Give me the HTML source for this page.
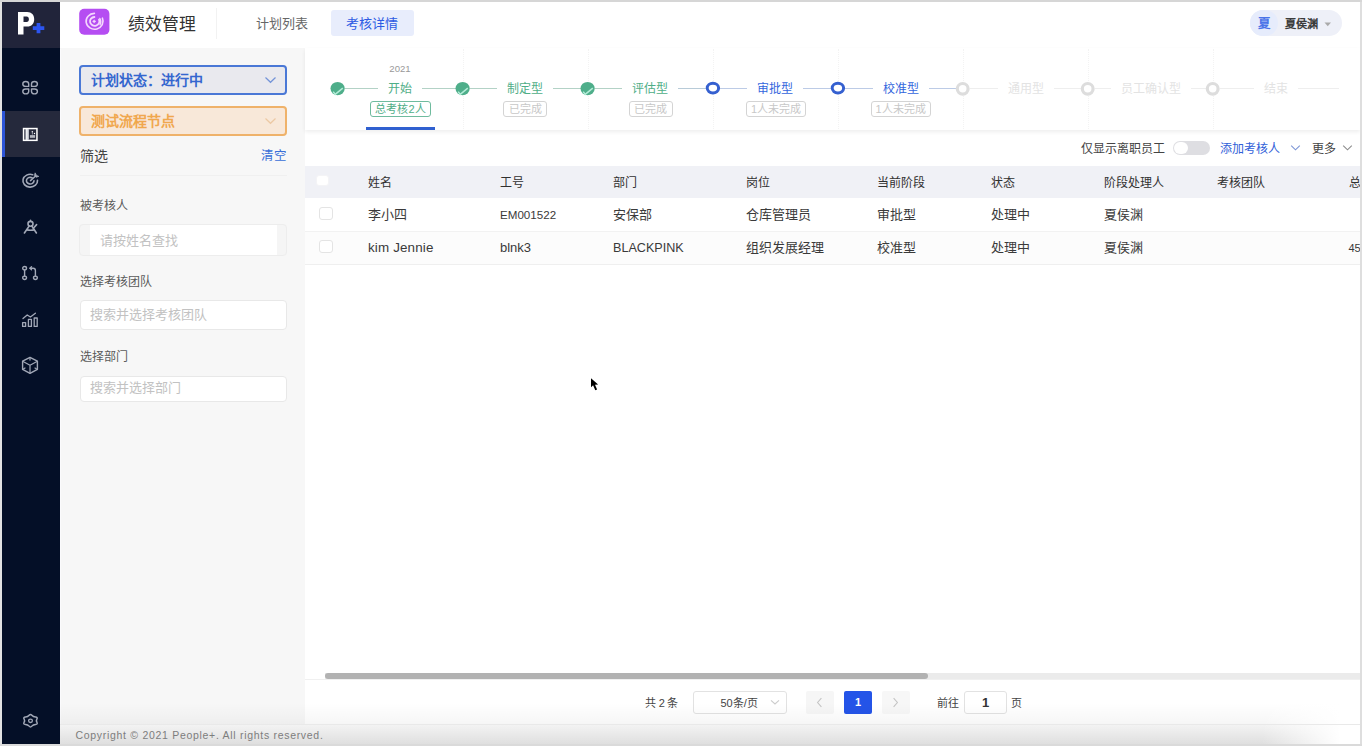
<!DOCTYPE html>
<html lang="zh-CN">
<head>
<meta charset="utf-8">
<title>绩效管理</title>
<style>
*{box-sizing:border-box;margin:0;padding:0}
html,body{width:1362px;height:746px;overflow:hidden}
body{font-family:"Liberation Sans",sans-serif;background:#fff;position:relative;color:#333;font-size:12px}
.a{position:absolute;white-space:nowrap}
/* frame */
#ft{left:0;top:0;width:1362px;height:2px;background:#d6d6d6}
#fl{left:0;top:2px;width:2px;height:744px;background:#e2e2e2}
#fr{left:1360px;top:2px;width:2px;height:744px;background:#dedede}
#fb{left:0;top:744px;width:1362px;height:2px;background:#dadada}
/* sidebar */
#sb{left:2px;top:2px;width:58px;height:742px;background:#040f27}
#logo{left:2px;top:2px;width:58px;height:46px;background:#21243a}
#act{left:2px;top:111px;width:58px;height:46px;background:#25293c}
#actbar{left:2px;top:111px;width:2.5px;height:46px;background:#2d55d8}
/* header */
#hd{left:60px;top:2px;width:1300px;height:47px;background:#fff;border-bottom:1px solid #f0f0f0}
/* left panel */
#lp{left:60px;top:48px;width:245px;height:677px;background:#f7f7f7}
/* main */
#mn{left:305px;top:48px;width:1055px;height:677px;background:#fff}
/* footer */
#ftr{left:60px;top:724px;width:1300px;height:20px;background:linear-gradient(#f4f4f4,#dfdfdf)}
</style>
</head>
<body>
<div class="a" id="sb"></div>
<div class="a" id="logo"></div>
<div class="a" id="act"></div>
<div class="a" id="actbar"></div>
<div class="a" id="hd"></div>
<div class="a" id="lp"></div>
<div class="a" id="mn"></div>
<div class="a" style="left:60px;top:49px;width:1px;height:675px;background:#fbfbfd"></div>
<div class="a" id="ftr"></div>

<!-- icon1: clover -->
<svg class="a" style="left:21px;top:80px" width="18" height="16" viewBox="0 0 18 16" fill="none" stroke="#a2a8b7" stroke-width="1.4" stroke-linejoin="round">
  <path d="M7.7 6.4 H4.65 A2.95 2.45 0 1 1 7.7 3.9 Z"/>
  <path d="M10.5 6.4 H13.55 A2.95 2.45 0 1 0 10.5 3.9 Z"/>
  <path d="M7.7 9 H4.65 A2.95 2.45 0 1 0 7.7 11.5 Z"/>
  <path d="M10.5 9 H13.55 A2.95 2.45 0 1 1 10.5 11.5 Z"/>
</svg>
<!-- icon2: board (active) -->
<svg class="a" style="left:22px;top:127px" width="17" height="15" viewBox="0 0 17 15">
  <rect x="1.55" y="1.55" width="13.4" height="11.8" fill="none" stroke="#fff" stroke-width="1.5"/>
  <rect x="3.5" y="2" width="3.4" height="11" fill="#eceef2"/>
  <rect x="5.7" y="2" width="1.3" height="11" fill="#b9bcc6"/>
  <rect x="7.9" y="8.1" width="5.2" height="2.7" fill="#b3b6c0"/>
  <circle cx="10.3" cy="4.8" r="0.7" fill="#fff"/>
  <circle cx="12.5" cy="6.5" r="0.7" fill="#fff"/>
  <rect x="9.9" y="5" width="0.9" height="2.6" fill="#9fa3b0"/>
</svg>
<!-- icon3: target -->
<svg class="a" style="left:21px;top:172px" width="19" height="17" viewBox="0 0 19 17" fill="none" stroke="#a2a8b7" stroke-linecap="round">
  <path d="M11.7 2.7 A7.3 6.4 0 1 0 16.5 8.2" stroke-width="1.6"/>
  <path d="M11.1 5.8 A3.8 3.3 0 1 0 13 8.9" stroke-width="1.6"/>
  <path d="M9.5 8.6 L14.6 4" stroke-width="1.5"/>
  <path d="M14.3 1.2 L15.5 3.4 L17.8 4.4 L15.2 5.2 L13.6 3.8 Z" stroke-width="0.8" stroke-linejoin="round" fill="#a2a8b7"/>
</svg>
<!-- icon4: compass/person -->
<svg class="a" style="left:22px;top:219px" width="17" height="16" viewBox="0 0 17 16" fill="none" stroke="#a2a8b7" stroke-linecap="round" stroke-width="1.6">
  <ellipse cx="8.5" cy="4.8" rx="2.5" ry="2.4"/>
  <path d="M8.5 1.4 V2.2"/>
  <path d="M7.2 7 L2.4 14"/>
  <path d="M9.8 7 L14.4 14"/>
  <path d="M4.8 10.9 Q8.5 11.6 12.2 10.9"/>
  <path d="M11.4 9.2 L14.6 5.6"/>
</svg>
<!-- icon5: pull request -->
<svg class="a" style="left:21px;top:265px" width="18" height="16" viewBox="0 0 18 16" fill="none" stroke="#a2a8b7" stroke-width="1.4" stroke-linecap="round" stroke-linejoin="round">
  <ellipse cx="3.6" cy="3.2" rx="1.9" ry="1.7"/>
  <ellipse cx="3.6" cy="12.8" rx="1.9" ry="1.7"/>
  <ellipse cx="14.4" cy="12.8" rx="1.9" ry="1.7"/>
  <path d="M3.6 5 V11"/>
  <path d="M14.4 11 V5.4 C14.4 4 13.6 3.2 12.2 3.2 H9"/>
  <path d="M10.5 1.7 L9 3.2 L10.5 4.7"/>
</svg>
<!-- icon6: chart -->
<svg class="a" style="left:21px;top:312px" width="18" height="16" viewBox="0 0 18 16" fill="none" stroke="#a2a8b7" stroke-width="1.3" stroke-linecap="round" stroke-linejoin="round">
  <rect x="1.6" y="10.6" width="3" height="3.8"/>
  <rect x="7.4" y="7.4" width="3" height="7"/>
  <rect x="13.2" y="6" width="3" height="8.4"/>
  <path d="M2 6.6 L6.2 3 L9.4 5 L14.4 1.2"/>
</svg>
<!-- icon7: cube -->
<svg class="a" style="left:21px;top:356px" width="18" height="19" viewBox="0 0 18 19" fill="none" stroke="#a2a8b7" stroke-width="1.4" stroke-linejoin="round">
  <path d="M9 1.4 L16.4 5.2 V13.4 L9 17.4 L1.6 13.4 V5.2 Z"/>
  <path d="M1.6 5.2 L9 9.2 L16.4 5.2 M9 9.2 V17.4" stroke-width="1.2"/>
  <path d="M9 1.4 V4.6 M1.6 13.4 L4.4 11.8 M16.4 13.4 L13.6 11.8" stroke-width="1.2"/>
</svg>
<!-- gear -->
<svg class="a" style="left:22px;top:713px" width="17" height="16" viewBox="0 0 17 16" fill="none" stroke="#a2a8b7" stroke-width="1.5" stroke-linejoin="round">
  <path d="M7.15 2.26 Q8.50 0.65 9.85 2.26 Q11.20 3.87 13.57 4.02 Q15.95 4.17 14.92 5.94 Q13.90 7.70 14.92 9.46 Q15.95 11.23 13.57 11.38 Q11.20 11.53 9.85 13.14 Q8.50 14.75 7.15 13.14 Q5.80 11.53 3.43 11.38 Q1.05 11.23 2.08 9.46 Q3.10 7.70 2.08 5.94 Q1.05 4.17 3.43 4.02 Q5.80 3.87 7.15 2.26 Z"/>
  <ellipse cx="8.5" cy="7.8" rx="1.9" ry="1.7" stroke-width="1.3"/>
</svg>

<!-- logo -->
<svg class="a" style="left:2px;top:2px" width="58" height="46" viewBox="2 2 58 46">
  <path d="M18 12 H27.2 C31.6 12 34.2 14.9 34.2 19.2 C34.2 23.6 31.6 26.5 27.2 26.5 H23.5 V34.5 H18 Z M23.5 16.5 V22 H26.6 C28.2 22 28.9 20.8 28.9 19.2 C28.9 17.7 28.2 16.5 26.6 16.5 Z" fill="#fff" fill-rule="evenodd"/>
  <path d="M36.6 23 h3.8 v3.2 h3.9 v3.8 h-3.9 v3.2 h-3.8 v-3.2 h-3.8 v-3.8 h3.8 z" fill="#2c55f0"/>
</svg>
<!-- app icon -->
<svg class="a" style="left:79px;top:8px" width="31" height="27" viewBox="0 0 31 27">
  <rect x="0.2" y="0.8" width="30.2" height="26" rx="5" fill="#b54df2"/>
  <g fill="none" stroke="#f5d8fd" stroke-linecap="round">
    <path d="M15.4 5.4 A8.5 7.9 0 1 0 23.4 10.2" stroke-width="1.6"/>
    <path d="M15.4 9 A4.7 4.4 0 1 0 20 11.6" stroke-width="1.8"/>
    <path d="M20.8 10.4 A6.6 6.2 0 0 1 21 16.6" stroke-width="1.3"/>
  </g>
  <path d="M13.6 13.4 L15.2 12 L16.8 13.4 L15.2 14.8 Z" fill="#f5d8fd" stroke="#f5d8fd" stroke-width="0.6" stroke-linejoin="round"/>
</svg>
<div class="a" style="left:128px;top:14px;height:22px;line-height:22px;font-size:16.8px;color:#333;letter-spacing:0px">绩效管理</div>
<div class="a" style="left:216px;top:8px;width:1px;height:31px;background:#f2f2f2"></div>
<div class="a" style="left:256px;top:13px;height:22px;line-height:22px;font-size:13px;color:#666">计划列表</div>
<div class="a" style="left:331px;top:10px;width:83px;height:26px;background:#e8edfc;border-radius:3px"></div>
<div class="a" style="left:346px;top:13px;height:22px;line-height:22px;font-size:13px;color:#2d5be3">考核详情</div>
<!-- user chip -->
<div class="a" style="left:1250px;top:10px;width:92px;height:26px;border-radius:13px;background:#eef0f8"></div>
<div class="a" style="left:1250px;top:10px;width:28px;height:26px;border-radius:13px;background:#e6ecfc"></div>
<div class="a" style="left:1258px;top:12px;height:24px;line-height:24px;font-size:12.5px;font-weight:bold;color:#4a74e8">夏</div>
<div class="a" style="left:1284.5px;top:12px;height:24px;line-height:24px;font-size:11.2px;font-weight:bold;color:#3c3c3c">夏侯渊</div>
<svg class="a" style="left:1324px;top:21.5px" width="8" height="5" viewBox="0 0 8 5"><path d="M0.5 0.5 H7 L3.75 4.2 Z" fill="#aaa"/></svg>


<div class="a" style="left:79px;top:65px;width:208px;height:30px;border:2px solid #4a78d6;border-radius:4px;background:#e9e9ee"></div>
<div class="a" style="left:91px;top:69px;height:22px;line-height:22px;font-size:14px;font-weight:bold;color:#3466cf">计划状态：进行中</div>
<svg class="a" style="left:264px;top:76px" width="13" height="8" viewBox="0 0 13 8"><path d="M1.5 1.5 L6.5 6.3 L11.5 1.5" fill="none" stroke="#7494d8" stroke-width="1.2"/></svg>
<div class="a" style="left:79px;top:106px;width:208px;height:30px;border:2px solid #efb26a;border-radius:4px;background:#f8e8d9"></div>
<div class="a" style="left:91px;top:110px;height:22px;line-height:22px;font-size:14px;font-weight:bold;color:#f0a74e">测试流程节点</div>
<svg class="a" style="left:264px;top:117px" width="13" height="8" viewBox="0 0 13 8"><path d="M1.5 1.5 L6.5 6.3 L11.5 1.5" fill="none" stroke="#ecc9a4" stroke-width="1.2"/></svg>
<div class="a" style="left:80px;top:144.5px;height:22px;line-height:22px;font-size:14px;font-weight:500;color:#444">筛选</div>
<div class="a" style="left:261px;top:145px;height:22px;line-height:22px;font-size:12.5px;color:#3a6fd8">清空</div>
<div class="a" style="left:80px;top:175px;width:207px;height:1px;background:#f0f0f0"></div>
<div class="a" style="left:80px;top:195px;height:22px;line-height:22px;font-size:12px;color:#5a5a5a">被考核人</div>
<div class="a" style="left:79px;top:224px;width:208px;height:32px;border:1px solid #ededed;border-radius:4px;background:#f5f5f5"></div>
<div class="a" style="left:90px;top:225px;width:187px;height:30px;background:#fff"></div>
<div class="a" style="left:100px;top:229.5px;height:22px;line-height:22px;font-size:13px;color:#c2c2c2">请按姓名查找</div>
<div class="a" style="left:80px;top:271px;height:22px;line-height:22px;font-size:12px;color:#5a5a5a">选择考核团队</div>
<div class="a" style="left:80px;top:300px;width:207px;height:30px;border:1px solid #e8e8e8;border-radius:4px;background:#fff"></div>
<div class="a" style="left:90px;top:304px;height:22px;line-height:22px;font-size:13px;color:#c2c2c2">搜索并选择考核团队</div>
<div class="a" style="left:80px;top:346px;height:22px;line-height:22px;font-size:12px;color:#5a5a5a">选择部门</div>
<div class="a" style="left:80px;top:376px;width:207px;height:26px;border:1px solid #e8e8e8;border-radius:4px;background:#fff"></div>
<div class="a" style="left:90px;top:377px;height:22px;line-height:22px;font-size:13px;color:#c2c2c2">搜索并选择部门</div>


<div class="a" style="left:305px;top:48px;width:1055px;height:82px;background:#fff;box-shadow:0 2px 4px rgba(0,0,0,0.07)"></div>
<div class="a" style="left:463px;top:49px;width:0;height:80px;border-left:1px dotted #f3f3f3"></div>
<div class="a" style="left:588px;top:49px;width:0;height:80px;border-left:1px dotted #f3f3f3"></div>
<div class="a" style="left:713px;top:49px;width:0;height:80px;border-left:1px dotted #f3f3f3"></div>
<div class="a" style="left:838px;top:49px;width:0;height:80px;border-left:1px dotted #f3f3f3"></div>
<div class="a" style="left:963px;top:49px;width:0;height:80px;border-left:1px dotted #f3f3f3"></div>
<div class="a" style="left:1088px;top:49px;width:0;height:80px;border-left:1px dotted #f3f3f3"></div>
<div class="a" style="left:1213px;top:49px;width:0;height:80px;border-left:1px dotted #f3f3f3"></div>
<div class="a" style="left:345px;top:88px;width:33px;height:1px;background:#b3d2c6"></div>
<div class="a" style="left:422px;top:88px;width:34px;height:1px;background:#b3d2c6"></div>
<div class="a" style="left:378px;top:78px;width:44px;height:22px;line-height:22px;font-size:12px;color:#4fae87;text-align:center">开始</div>
<div class="a" style="left:470px;top:88px;width:27px;height:1px;background:#b3d2c6"></div>
<div class="a" style="left:553px;top:88px;width:28px;height:1px;background:#b3d2c6"></div>
<div class="a" style="left:497px;top:78px;width:56px;height:22px;line-height:22px;font-size:12px;color:#4fae87;text-align:center">制定型</div>
<div class="a" style="left:595px;top:88px;width:27px;height:1px;background:#b3d2c6"></div>
<div class="a" style="left:678px;top:88px;width:28px;height:1px;background:#b8cbd8"></div>
<div class="a" style="left:622px;top:78px;width:56px;height:22px;line-height:22px;font-size:12px;color:#4fae87;text-align:center">评估型</div>
<div class="a" style="left:720px;top:88px;width:27px;height:1px;background:#bccbe6"></div>
<div class="a" style="left:803px;top:88px;width:28px;height:1px;background:#bccbe6"></div>
<div class="a" style="left:747px;top:78px;width:56px;height:22px;line-height:22px;font-size:12px;color:#3366dd;text-align:center">审批型</div>
<div class="a" style="left:845px;top:88px;width:28px;height:1px;background:#bccbe6"></div>
<div class="a" style="left:929px;top:88px;width:27px;height:1px;background:#bccbe6"></div>
<div class="a" style="left:873px;top:78px;width:56px;height:22px;line-height:22px;font-size:12px;color:#3366dd;text-align:center">校准型</div>
<div class="a" style="left:970px;top:88px;width:28px;height:1px;background:#eeeeee"></div>
<div class="a" style="left:1054px;top:88px;width:27px;height:1px;background:#eeeeee"></div>
<div class="a" style="left:998px;top:78px;width:56px;height:22px;line-height:22px;font-size:12px;color:#e3e3e3;text-align:center">通用型</div>
<div class="a" style="left:1095px;top:88px;width:16px;height:1px;background:#eeeeee"></div>
<div class="a" style="left:1191px;top:88px;width:15px;height:1px;background:#eeeeee"></div>
<div class="a" style="left:1111px;top:78px;width:80px;height:22px;line-height:22px;font-size:12px;color:#e3e3e3;text-align:center">员工确认型</div>
<div class="a" style="left:1220px;top:88px;width:34px;height:1px;background:#eeeeee"></div>
<div class="a" style="left:1298px;top:88px;width:41px;height:1px;background:#eeeeee"></div>
<div class="a" style="left:1254px;top:78px;width:44px;height:22px;line-height:22px;font-size:12px;color:#e3e3e3;text-align:center">结束</div>
<svg class="a" style="left:330px;top:81px" width="15" height="15" viewBox="0 0 15 15"><ellipse cx="7.6" cy="7.6" rx="7.1" ry="6.7" fill="#4eae8a"/><path d="M3.2 10.6 L5.2 13.4 L12.8 7.2" fill="none" stroke="#b4ecd8" stroke-width="1.5"/></svg>
<svg class="a" style="left:455px;top:81px" width="15" height="15" viewBox="0 0 15 15"><ellipse cx="7.6" cy="7.6" rx="7.1" ry="6.7" fill="#4eae8a"/><path d="M3.2 10.6 L5.2 13.4 L12.8 7.2" fill="none" stroke="#b4ecd8" stroke-width="1.5"/></svg>
<svg class="a" style="left:580px;top:81px" width="15" height="15" viewBox="0 0 15 15"><ellipse cx="7.6" cy="7.6" rx="7.1" ry="6.7" fill="#4eae8a"/><path d="M3.2 10.6 L5.2 13.4 L12.8 7.2" fill="none" stroke="#b4ecd8" stroke-width="1.5"/></svg>
<svg class="a" style="left:705px;top:81px" width="15" height="15" viewBox="0 0 15 15"><ellipse cx="7.9" cy="7.1" rx="5.7" ry="4.85" fill="#fff" stroke="#3560d0" stroke-width="2.9"/></svg>
<svg class="a" style="left:830px;top:81px" width="15" height="15" viewBox="0 0 15 15"><ellipse cx="7.9" cy="7.1" rx="5.7" ry="4.85" fill="#fff" stroke="#3560d0" stroke-width="2.9"/></svg>
<svg class="a" style="left:955px;top:81px" width="15" height="15" viewBox="0 0 15 15"><ellipse cx="7.7" cy="7.8" rx="5.4" ry="5.3" fill="#fff" stroke="#dddddd" stroke-width="3.2"/></svg>
<svg class="a" style="left:1080px;top:81px" width="15" height="15" viewBox="0 0 15 15"><ellipse cx="7.7" cy="7.8" rx="5.4" ry="5.3" fill="#fff" stroke="#dddddd" stroke-width="3.2"/></svg>
<svg class="a" style="left:1205px;top:81px" width="15" height="15" viewBox="0 0 15 15"><ellipse cx="7.7" cy="7.8" rx="5.4" ry="5.3" fill="#fff" stroke="#dddddd" stroke-width="3.2"/></svg>
<div class="a" style="left:388px;top:62px;width:24px;height:14px;line-height:14px;font-size:9.6px;color:#999;text-align:center">2021</div>
<div class="a" style="left:370px;top:101px;width:61px;height:16px;line-height:15px;border:1px solid #6fbb9e;border-radius:3px;font-size:11px;color:#4fae87;text-align:center;background:#fff">总考核2人</div>
<div class="a" style="left:503px;top:101px;width:44px;height:16px;line-height:15px;border:1px solid #d4d4d4;border-radius:3px;font-size:11px;color:#c8c8c8;text-align:center;background:#fff">已完成</div>
<div class="a" style="left:628.5px;top:101px;width:44px;height:16px;line-height:15px;border:1px solid #d4d4d4;border-radius:3px;font-size:11px;color:#c8c8c8;text-align:center;background:#fff">已完成</div>
<div class="a" style="left:746px;top:101px;width:60px;height:16px;line-height:15px;border:1px solid #d4d4d4;border-radius:3px;font-size:11px;color:#c8c8c8;text-align:center;background:#fff">1人未完成</div>
<div class="a" style="left:870.5px;top:101px;width:60px;height:16px;line-height:15px;border:1px solid #d4d4d4;border-radius:3px;font-size:11px;color:#c8c8c8;text-align:center;background:#fff">1人未完成</div>
<div class="a" style="left:366px;top:127px;width:69px;height:3px;background:#3060d0"></div>


<div class="a" style="left:1081px;top:138px;height:22px;line-height:22px;font-size:12px;color:#444">仅显示离职员工</div>
<div class="a" style="left:1173px;top:141px;width:37px;height:14px;border-radius:7px;background:#dedee2"></div>
<div class="a" style="left:1174px;top:142px;width:14px;height:12px;border-radius:6px;background:#fff"></div>
<div class="a" style="left:1220px;top:138px;height:22px;line-height:22px;font-size:12px;color:#3060d8">添加考核人</div>
<svg class="a" style="left:1290px;top:144px" width="11" height="8" viewBox="0 0 11 8"><path d="M1.2 1.6 L5.5 5.8 L9.8 1.6" fill="none" stroke="#7d96d6" stroke-width="1.1"/></svg>
<div class="a" style="left:1312px;top:138px;height:22px;line-height:22px;font-size:12px;color:#444">更多</div>
<svg class="a" style="left:1342px;top:144px" width="11" height="8" viewBox="0 0 11 8"><path d="M1.2 1.6 L5.5 5.8 L9.8 1.6" fill="none" stroke="#8c8c8c" stroke-width="1.1"/></svg>


<div class="a" style="left:305px;top:166px;width:1055px;height:32px;background:#f0f1f6"></div>
<div class="a" style="left:305px;top:231px;width:1055px;height:1px;background:#f2f2f2"></div>
<div class="a" style="left:305px;top:232px;width:1055px;height:32px;background:#fcfcfc"></div>
<div class="a" style="left:305px;top:264px;width:1055px;height:1px;background:#efefef"></div>
<div class="a" style="left:316px;top:175px;width:13px;height:11px;border-radius:3px;background:#fff;border:1px solid #f4f4f6"></div>
<div class="a" style="left:319px;top:207px;width:14px;height:13px;border-radius:3px;background:#fff;border:1px solid #e4e4e4"></div>
<div class="a" style="left:319px;top:240px;width:14px;height:13px;border-radius:3px;background:#fff;border:1px solid #e4e4e4"></div>
<div class="a" style="left:368px;top:171.5px;height:22px;line-height:22px;font-size:12px;font-weight:500;color:#303030">姓名</div>
<div class="a" style="left:500px;top:171.5px;height:22px;line-height:22px;font-size:12px;font-weight:500;color:#303030">工号</div>
<div class="a" style="left:613px;top:171.5px;height:22px;line-height:22px;font-size:12px;font-weight:500;color:#303030">部门</div>
<div class="a" style="left:746px;top:171.5px;height:22px;line-height:22px;font-size:12px;font-weight:500;color:#303030">岗位</div>
<div class="a" style="left:877px;top:171.5px;height:22px;line-height:22px;font-size:12px;font-weight:500;color:#303030">当前阶段</div>
<div class="a" style="left:990.5px;top:171.5px;height:22px;line-height:22px;font-size:12px;font-weight:500;color:#303030">状态</div>
<div class="a" style="left:1103.5px;top:171.5px;height:22px;line-height:22px;font-size:12px;font-weight:500;color:#303030">阶段处理人</div>
<div class="a" style="left:1217px;top:171.5px;height:22px;line-height:22px;font-size:12px;font-weight:500;color:#303030">考核团队</div>
<div class="a" style="left:1348.5px;top:171.5px;height:22px;line-height:22px;font-size:12px;font-weight:500;color:#303030">总分</div>
<div class="a" style="left:368px;top:204px;height:22px;line-height:22px;font-size:13px;color:#3a3a3a">李小四</div>
<div class="a" style="left:500px;top:204px;height:22px;line-height:22px;font-size:11.6px;color:#3a3a3a">EM001522</div>
<div class="a" style="left:613px;top:204px;height:22px;line-height:22px;font-size:13px;color:#3a3a3a">安保部</div>
<div class="a" style="left:746px;top:204px;height:22px;line-height:22px;font-size:13px;color:#3a3a3a">仓库管理员</div>
<div class="a" style="left:877px;top:204px;height:22px;line-height:22px;font-size:13px;color:#3a3a3a">审批型</div>
<div class="a" style="left:990.5px;top:204px;height:22px;line-height:22px;font-size:13px;color:#3a3a3a">处理中</div>
<div class="a" style="left:1103.5px;top:204px;height:22px;line-height:22px;font-size:13px;color:#3a3a3a">夏侯渊</div>
<div class="a" style="left:368px;top:237px;height:22px;line-height:22px;font-size:13.4px;letter-spacing:0.15px;color:#3a3a3a">kim Jennie</div>
<div class="a" style="left:500px;top:237px;height:22px;line-height:22px;font-size:13px;color:#3a3a3a">blnk3</div>
<div class="a" style="left:613px;top:237px;height:22px;line-height:22px;font-size:12.6px;color:#3a3a3a">BLACKPINK</div>
<div class="a" style="left:746px;top:237px;height:22px;line-height:22px;font-size:13px;color:#3a3a3a">组织发展经理</div>
<div class="a" style="left:877px;top:237px;height:22px;line-height:22px;font-size:13px;color:#3a3a3a">校准型</div>
<div class="a" style="left:990.5px;top:237px;height:22px;line-height:22px;font-size:13px;color:#3a3a3a">处理中</div>
<div class="a" style="left:1103.5px;top:237px;height:22px;line-height:22px;font-size:13px;color:#3a3a3a">夏侯渊</div>
<div class="a" style="left:1348.5px;top:237px;height:22px;line-height:22px;font-size:11px;color:#3a3a3a">45</div>



<div class="a" style="left:305px;top:679px;width:1055px;height:1px;background:#f0f0f0"></div>
<div class="a" style="left:325px;top:673px;width:1035px;height:6px;background:#ebebeb"></div>
<div class="a" style="left:325px;top:673px;width:603px;height:6px;background:#b2b2b2;border-radius:3px"></div>
<div class="a" style="left:645px;top:691.5px;height:22px;line-height:22px;font-size:11px;word-spacing:-0.4px;color:#444">共 2 条</div>
<div class="a" style="left:693px;top:691px;width:94px;height:23px;border:1px solid #e2e2e2;border-radius:3px;background:#fff"></div>
<div class="a" style="left:720.5px;top:691.5px;height:22px;line-height:22px;font-size:11px;color:#444">50条/页</div>
<svg class="a" style="left:770px;top:699px" width="10" height="7" viewBox="0 0 10 7"><path d="M1 1.4 L5 5 L9 1.4" fill="none" stroke="#ccc" stroke-width="1.1"/></svg>
<div class="a" style="left:806px;top:691px;width:28px;height:23px;border-radius:2px;background:#f6f6f6"></div>
<svg class="a" style="left:816px;top:697px" width="7" height="11" viewBox="0 0 7 11"><path d="M5.4 1.2 L1.6 5.5 L5.4 9.8" fill="none" stroke="#c4c4c4" stroke-width="1.1"/></svg>
<div class="a" style="left:844px;top:691px;width:28px;height:23px;border-radius:2px;background:#2454e8"></div>
<div class="a" style="left:844px;top:691px;width:28px;height:23px;line-height:23px;font-size:11px;font-weight:bold;color:#fff;text-align:center">1</div>
<div class="a" style="left:882px;top:691px;width:28px;height:23px;border-radius:2px;background:#f7f7f7"></div>
<svg class="a" style="left:892px;top:697px" width="7" height="11" viewBox="0 0 7 11"><path d="M1.6 1.2 L5.4 5.5 L1.6 9.8" fill="none" stroke="#c4c4c4" stroke-width="1.1"/></svg>
<div class="a" style="left:937px;top:692px;height:22px;line-height:22px;font-size:11px;color:#444">前往</div>
<div class="a" style="left:964px;top:691px;width:43px;height:23px;border:1px solid #e2e2e2;border-radius:3px;background:#fff"></div>
<div class="a" style="left:964px;top:691px;width:43px;height:23px;line-height:23px;font-size:13px;font-weight:bold;color:#333;text-align:center">1</div>
<div class="a" style="left:1011px;top:692px;height:22px;line-height:22px;font-size:11px;color:#444">页</div>


<div class="a" style="left:60px;top:703px;width:1300px;height:21px;background:linear-gradient(rgba(0,0,0,0),rgba(0,0,0,0.035))"></div>
<div class="a" style="left:1262px;top:703px;width:98px;height:41px;background:linear-gradient(to right,rgba(255,255,255,0),#fff 80%)"></div>
<div class="a" style="left:60px;top:724px;width:1300px;height:1px;background:#e9e9e9"></div>
<div class="a" style="left:75.5px;top:725px;height:20px;line-height:20px;font-size:10.5px;color:#7d7d7d;letter-spacing:0.7px">Copyright © 2021 People+. All rights reserved.</div>

<!-- mouse cursor -->
<svg class="a" style="left:586px;top:374px" width="18" height="20" viewBox="586 374 18 20"><path d="M591 378.2 L591 387.2 L593.1 385.3 L595.3 390.2 L597.1 389.4 L595 384.7 L598.1 384.6 Z" fill="#000" stroke="#fff" stroke-width="0.8" stroke-linejoin="round" paint-order="stroke"/></svg>
<div class="a" id="ft"></div>
<div class="a" id="fl"></div>
<div class="a" id="fr"></div>
<div class="a" id="fb"></div>
</body>
</html>
